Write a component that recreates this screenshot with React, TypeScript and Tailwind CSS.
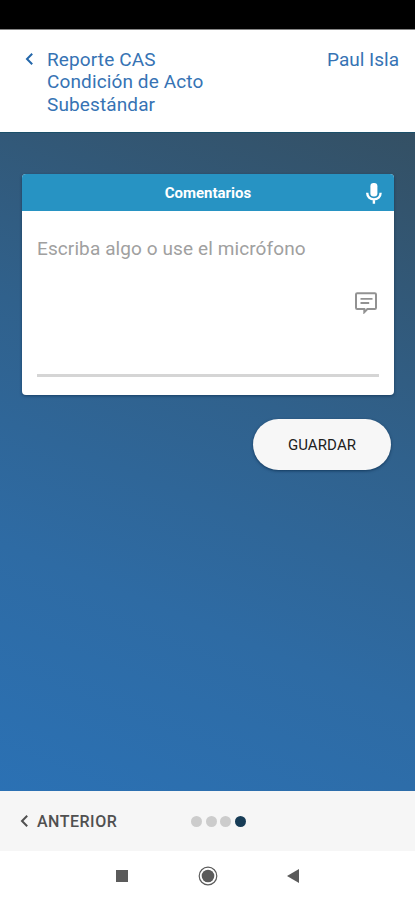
import React from 'react';

const ChevronLeft = ({ className }: { className: string }) => (
  <svg viewBox="0 0 8 12" fill="none" stroke="currentColor" strokeWidth="2" className={className}>
    <path d="M7.2 .7L2 6l5.2 5.3" />
  </svg>
);

const MicIcon = () => (
  <svg viewBox="0 0 16 21" className="h-[21px] w-4" fill="none">
    <rect x="4.4" y="0" width="7" height="13.4" rx="3.2" fill="#fff" />
    <path d="M1.2 9.8c0 4.1 3 6.6 6.7 6.6s6.7-2.5 6.7-6.6M7.9 16v4.8" stroke="#fff" strokeWidth="2.4" />
  </svg>
);

const CommentIcon = () => (
  <svg viewBox="0 0 22 22" className="size-[22px]" fill="none" stroke="#929292">
    <path d="M2.2 1.2h17.6c.7 0 1.2.5 1.2 1.2v13.4c0 .7-.5 1.2-1.2 1.2h-7.4L9.3 20.2V17H2.2c-.7 0-1.2-.5-1.2-1.2V2.4c0-.7.5-1.2 1.2-1.2z" strokeWidth="2" />
    <path d="M5.5 6.9h12M5.5 11h8.7" strokeWidth="1.8" />
  </svg>
);

export default function App() {
  const steps = [1, 2, 3, 4];
  const currentStep = 4;

  return (
    <div className="flex h-[900px] w-[415px] flex-col overflow-hidden bg-white font-['Roboto',sans-serif]">
      <div className="h-[30px] shrink-0 border-b border-[#858585] bg-black" />

      <header className="flex h-[102px] shrink-0 items-start justify-between pt-[19px] pr-4 pl-[25px] text-[19px] leading-[22.3px] text-[#3673b4]">
        <div className="flex">
          <ChevronLeft className="mt-[4px] mr-[14px] h-3 w-2 text-[#2467aa]" />
          <h1 className="w-[170px] tracking-[0.12px]">Reporte CAS Condición de Acto Subestándar</h1>
        </div>
        <span>Paul Isla</span>
      </header>

      <main className="flex h-[659px] shrink-0 flex-col border-t border-[#1b506a] bg-[linear-gradient(22deg,#2b71b4_0%,#2e6ba4_30%,#30618c_60%,#345064_100%)] pt-[41px] pr-[21px] pl-[22px]">
        <section className="flex h-[221px] flex-col overflow-hidden rounded-[4px] bg-white shadow-[0_1px_3px_rgba(0,30,60,0.5)]">
          <div className="grid h-[37px] shrink-0 grid-cols-[1fr_auto_1fr] items-center bg-[#2793c3] pr-3">
            <h2 className="col-start-2 pt-0.5 pl-3 text-[15px] font-bold text-white">Comentarios</h2>
            <button className="justify-self-end pt-0.5" aria-label="Dictar">
              <MicIcon />
            </button>
          </div>
          <div className="mx-[15px] flex h-[166px] flex-col border-b-[3px] border-[#d5d5d5] pt-[26px]">
            <p className="text-[19px] leading-6 tracking-[0.1px] text-[#a0a0a0]">Escriba algo o use el micrófono</p>
            <div className="mt-[31px] mr-0.5 self-end">
              <CommentIcon />
            </div>
          </div>
        </section>

        <button className="mt-[24px] mr-[3px] h-[51px] w-[138px] self-end rounded-full bg-[#f7f7f7] pt-0.5 text-[15px] tracking-[0.1px] text-[#202020] shadow-[0_1px_3px_rgba(0,30,60,0.6)]">
          GUARDAR
        </button>
      </main>

      <footer className="flex h-[60px] shrink-0 items-center bg-[#f6f6f6] pl-5 text-[#505050]">
        <button className="flex w-[171px] items-center text-base font-medium tracking-[0.5px]">
          <ChevronLeft className="mr-[9px] h-3 w-2" />
          <span className="pt-0.5">ANTERIOR</span>
        </button>
        <div className="flex gap-[3.5px]">
          {steps.map(step => (
            <span key={step} className={`size-[11px] rounded-full ${step === currentStep ? 'bg-[#173c56]' : 'bg-[#cccccc]'}`} />
          ))}
        </div>
      </footer>

      <nav className="flex h-[49px] shrink-0 items-center pl-[116px] text-[#5b5b5b]">
        <span className="size-3 bg-current" />
        <svg viewBox="0 0 20 20" className="ml-[70px] size-5" fill="none">
          <circle cx="10" cy="10" r="8.8" stroke="currentColor" strokeWidth="1.2" />
          <circle cx="10" cy="10" r="6.3" fill="currentColor" />
        </svg>
        <svg viewBox="0 0 12 14" className="ml-[69px] h-[14px] w-3" fill="currentColor">
          <path d="M0 7L12 0v14z" />
        </svg>
      </nav>
    </div>
  );
}
